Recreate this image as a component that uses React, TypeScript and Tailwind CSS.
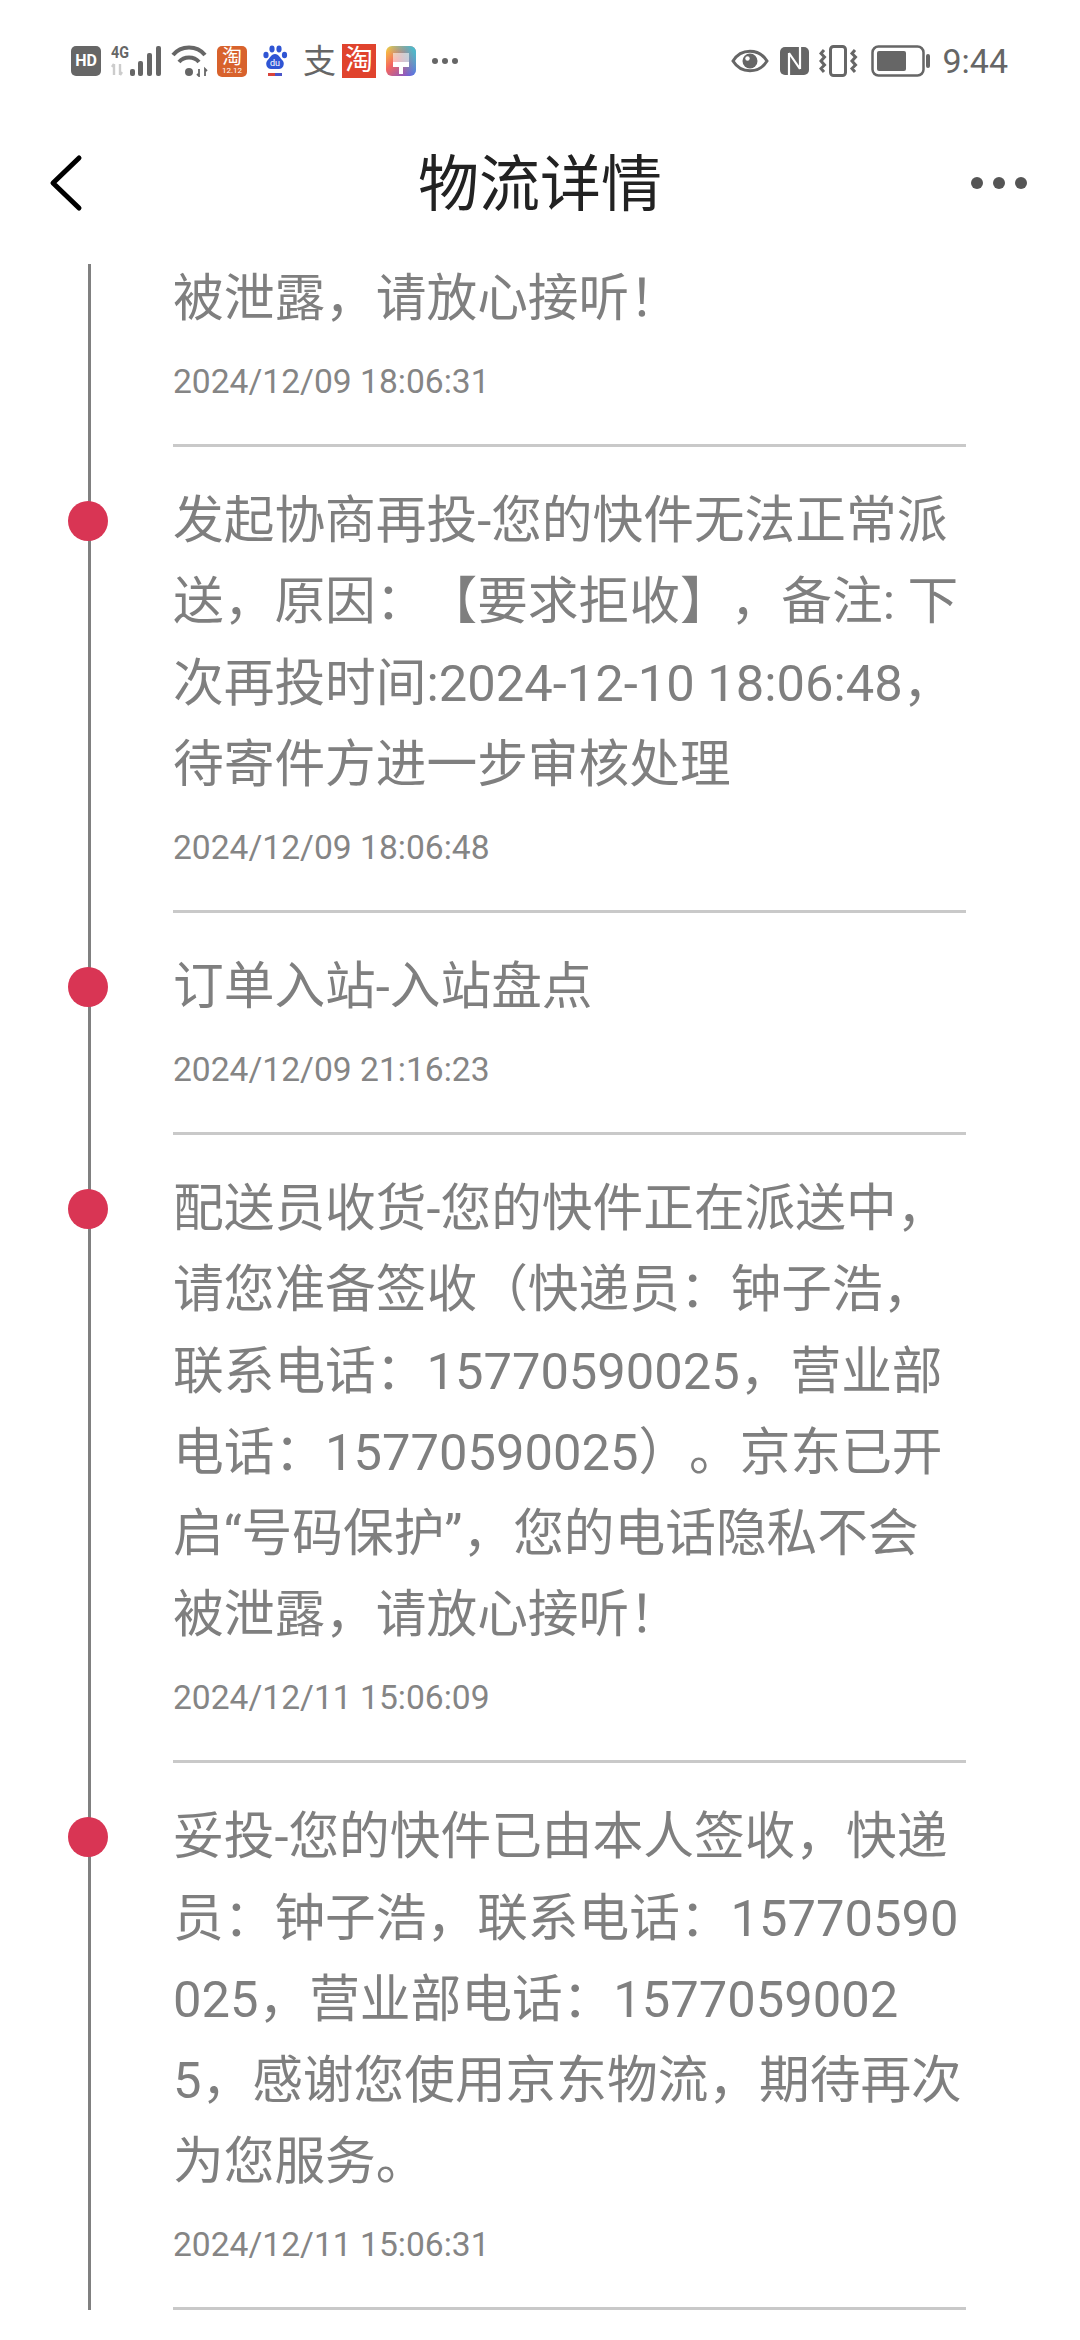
const cjk = "font-['Roboto','Noto_Sans_CJK_SC',sans-serif]";

const items = [
  {
    lines: ["发起协商再投-您的快件无法正常派", "送，原因：【要求拒收】，备注: 下", "次再投时间:2024-12-10 18:06:48，", "待寄件方进一步审核处理"],
    time: "2024/12/09 18:06:48",
  },
  { lines: ["订单入站-入站盘点"], time: "2024/12/09 21:16:23" },
  {
    lines: ["配送员收货-您的快件正在派送中，", "请您准备签收（快递员：钟子浩，", "联系电话：15770590025，营业部", "电话：15770590025）。京东已开", "启“号码保护”，您的电话隐私不会", "被泄露，请放心接听！"],
    time: "2024/12/11 15:06:09",
  },
  {
    lines: ["妥投-您的快件已由本人签收，快递", "员：钟子浩，联系电话：15770590", "025，营业部电话：1577059002", "5，感谢您使用京东物流，期待再次", "为您服务。"],
    time: "2024/12/11 15:06:31",
  },
];

function Bars() {
  return (
    <svg width="50" height="36" viewBox="0 -4 50 36" className="-mt-[4px]">
      <text x="0" y="13" fontSize="17" fontWeight="700" fill="#666" fontFamily="Roboto" textLength="18" lengthAdjust="spacingAndGlyphs">4G</text>
      <path d="M3 19v11M3 19l-2 3M9 19v11M9 30l2-3" stroke="#ccc" strokeWidth="2.4" fill="none" />
      <rect x="19" y="24" width="5" height="7" rx="2" fill="#666" />
      <rect x="27" y="16" width="5" height="15" rx="2" fill="#666" />
      <rect x="36" y="8" width="5" height="23" rx="2" fill="#666" />
      <rect x="45" y="1" width="5" height="30" rx="2" fill="#666" />
    </svg>
  );
}

function Wifi() {
  return (
    <svg width="38" height="32" viewBox="0 0 38 32" fill="none" stroke="#666" strokeWidth="4">
      <path d="M2 10C10 0 26 0 34 10" />
      <path d="M8 17c5-6 15-6 20 0" />
      <circle cx="18" cy="27" r="4" fill="#666" stroke="none" />
      <path d="M28 24v7l-2-2M34 31v-7l2 2" strokeWidth="1.8" />
    </svg>
  );
}

function Brush() {
  return (
    <svg width="30" height="30" viewBox="0 0 30 30">
      <defs>
        <linearGradient id="brushBg" x1="0" y1="0" x2="1" y2="1">
          <stop offset="0" stopColor="#f5d63c" />
          <stop offset="0.4" stopColor="#f4655f" />
          <stop offset="1" stopColor="#5a55f0" />
        </linearGradient>
        <linearGradient id="brushTop" x1="1" y1="0" x2="0.3" y2="0.5">
          <stop offset="0" stopColor="#35c9d8" />
          <stop offset="1" stopColor="#35c9d8" stopOpacity="0" />
        </linearGradient>
      </defs>
      <rect width="30" height="30" rx="6" fill="url(#brushBg)" />
      <rect width="30" height="30" rx="6" fill="url(#brushTop)" />
      <path d="M7 7h16v9H7z" fill="#fff" opacity="0.55" />
      <path d="M7 16h16v5h-6v7h-4v-7H7z" fill="#fff" />
    </svg>
  );
}

function Baidu() {
  return (
    <svg width="26" height="32" viewBox="0 0 26 32">
      <ellipse cx="4" cy="10" rx="2.6" ry="3.2" fill="#2f55d4" />
      <ellipse cx="10" cy="4" rx="2.6" ry="3.4" fill="#2f55d4" />
      <ellipse cx="17" cy="4" rx="2.6" ry="3.4" fill="#2f55d4" />
      <ellipse cx="22.5" cy="10" rx="2.6" ry="3.2" fill="#2f55d4" />
      <path d="M13 9c-4 0-5 4-8 7-2 3 0 8 4 8h8c4 0 6-5 4-8-3-3-4-7-8-7z" fill="#2f55d4" />
      <text x="13" y="21" textAnchor="middle" fontSize="9" fill="#fff" fontFamily="Roboto">du</text>
      <rect x="6" y="28" width="7" height="3" fill="#d9433b" />
      <rect x="13" y="28" width="7" height="3" fill="#4a55c8" />
    </svg>
  );
}

function Eye() {
  return (
    <svg width="38" height="28" viewBox="0 0 38 28" fill="none">
      <path d="M2 14C10 1 28 1 36 14 28 27 10 27 2 14z" stroke="#666" strokeWidth="3" />
      <circle cx="19" cy="14" r="7.5" fill="#666" />
      <circle cx="16.5" cy="11.5" r="2.2" fill="#fff" />
    </svg>
  );
}

function Nfc() {
  return (
    <svg width="29" height="28" viewBox="0 0 29 28">
      <rect width="29" height="28" rx="5" fill="#666" />
      <path d="M9 6v22M20 0v22M9 6l11 16" stroke="#fff" strokeWidth="2.2" fill="none" />
    </svg>
  );
}

function Vibrate() {
  return (
    <svg width="40" height="32" viewBox="0 0 40 32" fill="none" stroke="#666">
      <rect x="11.5" y="1.5" width="15" height="29" rx="3" strokeWidth="3" />
      <path d="M5 5L2 8.5l3.5 3.5L2 16l3.5 4L2 23.5 5 27M36 5l-3 3.5 3.5 3.5-3.5 4 3.5 4-3.5 3.5 3 3.5" strokeWidth="3" />
    </svg>
  );
}

function Battery() {
  return (
    <svg width="60" height="32" viewBox="0 0 60 32">
      <rect x="1.5" y="1.5" width="51" height="29" rx="6" fill="none" stroke="#666" strokeWidth="2.5" />
      <rect x="6" y="6" width="29" height="20" rx="2" fill="#666" />
      <rect x="55" y="9" width="4" height="14" rx="2" fill="#666" />
    </svg>
  );
}

function Dots() {
  return (
    <div className="flex items-center gap-[4px]">
      <span className="w-[6px] h-[6px] rounded-full bg-[#666]"></span>
      <span className="w-[6px] h-[6px] rounded-full bg-[#666]"></span>
      <span className="w-[6px] h-[6px] rounded-full bg-[#666]"></span>
    </div>
  );
}

function StatusBar() {
  return (
    <div className={`h-[122px] flex items-center justify-between pl-[71px] pr-[72px] ${cjk}`}>
      <div className="flex items-center">
        <div className="w-[30px] h-[30px] rounded-[5px] bg-[#666] flex items-center justify-center text-white text-[16px] leading-none font-bold font-['Roboto',sans-serif]">HD</div>
        <div className="ml-[10px] h-[32px]"><Bars /></div>
        <div className="ml-[10px]"><Wifi /></div>
        <div className="ml-[8px] w-[30px] h-[31px] rounded-[5px] bg-[#d8622c] flex flex-col items-center justify-center text-white leading-none">
          <span className="text-[20px] leading-[20px]">淘</span>
          <span className="text-[8px] leading-[8px]">12.12</span>
        </div>
        <div className="ml-[15px]"><Baidu /></div>
        <div className="ml-[15px] w-[33px] text-center text-[33px] leading-none text-[#666]">支</div>
        <div className="ml-[6px] w-[34px] h-[34px] bg-[#e0432d] flex items-center justify-center text-white text-[28px] leading-none">淘</div>
        <div className="ml-[10px]"><Brush /></div>
        <div className="ml-[16px]"><Dots /></div>
      </div>
      <div className="flex items-center">
        <Eye />
        <div className="ml-[11px]"><Nfc /></div>
        <div className="ml-[10px]"><Vibrate /></div>
        <div className="ml-[12px]"><Battery /></div>
        <span className="ml-[11px] text-[34px] leading-none text-[#666]">9:44</span>
      </div>
    </div>
  );
}

function NavBar() {
  return (
    <div className="h-[142px] grid grid-cols-[1fr_auto_1fr] items-center px-[48px] pb-[20px]">
      <svg width="36" height="60" viewBox="0 0 36 60" fill="none" stroke="#000" strokeWidth="5" strokeLinecap="round" strokeLinejoin="round">
        <path d="M31 5L5 30l26 25" />
      </svg>
      <h1 className={`mt-[4px] text-[61px] leading-none font-normal text-[#222] ${cjk}`}>物流详情</h1>
      <div className="mr-[5px] flex items-center justify-end gap-[10px]">
        <span className="w-[12px] h-[12px] rounded-full bg-[#555]"></span>
        <span className="w-[12px] h-[12px] rounded-full bg-[#555]"></span>
        <span className="w-[12px] h-[12px] rounded-full bg-[#555]"></span>
      </div>
    </div>
  );
}

function Item({ lines, time }: { lines: string[]; time: string }) {
  return (
    <div className="relative pt-[33px]">
      <span className="absolute left-[-105px] top-[54px] w-[40px] h-[40px] rounded-full bg-[#d93554]"></span>
      <div className="text-[50.7px] leading-[81.2px] text-[#7f7f7f] [text-spacing-trim:space-all]">
        {lines.map((l) => (
          <div key={l} className="whitespace-nowrap">{l}</div>
        ))}
      </div>
      <div className="mt-[23px] h-[40px] text-[33.6px] leading-[40px] text-[#858585]">{time}</div>
      <div className="mt-[42px] w-[793px] h-[3px] bg-[#c9c9c9]"></div>
    </div>
  );
}

export default function App() {
  return (
    <div className={`w-[1080px] h-[2340px] bg-white overflow-hidden ${cjk}`}>
      <StatusBar />
      <NavBar />
      <div className="relative flex flex-col h-[2046px] pl-[173px]">
        <div className="absolute left-[88px] top-0 h-[2046px] w-[3px] bg-[#808080]"></div>
        <div className="-mt-[6px]">
          <div className="text-[50.7px] leading-[81.2px] text-[#7f7f7f] [text-spacing-trim:space-all]">被泄露，请放心接听！</div>
          <div className="mt-[23px] h-[40px] text-[33.6px] leading-[40px] text-[#858585]">2024/12/09 18:06:31</div>
          <div className="mt-[42px] w-[793px] h-[3px] bg-[#c9c9c9]"></div>
        </div>
        {items.map((it) => (
          <Item key={it.time} lines={it.lines} time={it.time} />
        ))}
      </div>
    </div>
  );
}
